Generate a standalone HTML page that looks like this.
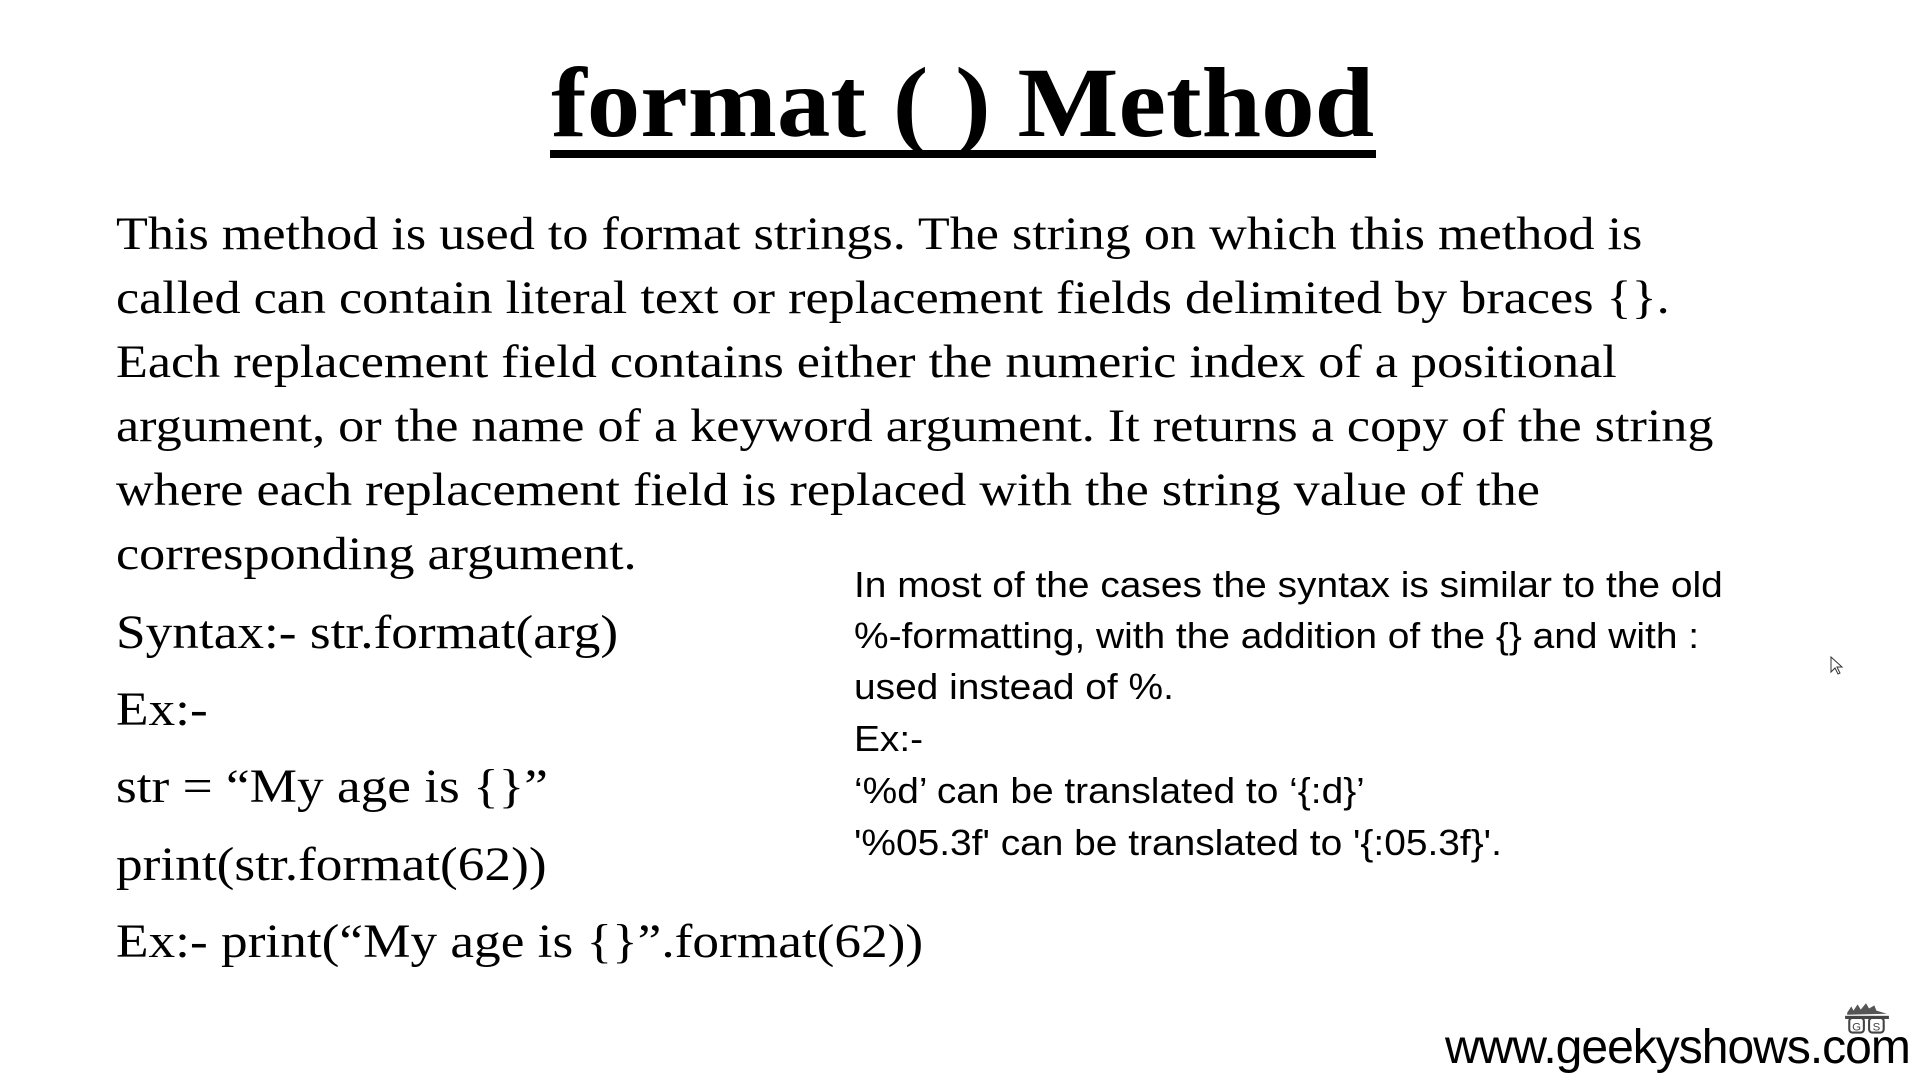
<!DOCTYPE html>
<html><head><meta charset="utf-8"><style>
html,body{margin:0;padding:0;background:#fff;width:1920px;height:1080px;overflow:hidden;position:relative}
.t{position:absolute;white-space:nowrap;line-height:1;color:#000;transform-origin:0 0}
.s{font-family:"Liberation Serif",serif;font-size:47px;transform:scaleX(1.11)}
.x{font-family:"Liberation Sans",sans-serif;font-size:36px;transform:scaleX(1.08)}
</style></head><body>
<div class="t" style="left:550px;width:826px;text-align:center;top:53px;font-family:'Liberation Serif',serif;font-weight:bold;font-size:100px"><span style="display:inline-block;transform:scaleX(1.07)">format ( ) Method</span></div>
<div style="position:absolute;left:550px;top:150px;width:826px;height:8px;background:#000"></div>

<div class="t s" style="left:116px;top:211px">This method is used to format strings. The string on which this method is</div>
<div class="t s" style="left:116px;top:275px">called can contain literal text or replacement fields delimited by braces {}.</div>
<div class="t s" style="left:116px;top:339px">Each replacement field contains either the numeric index of a positional</div>
<div class="t s" style="left:116px;top:403px">argument, or the name of a keyword argument. It returns a copy of the string</div>
<div class="t s" style="left:116px;top:467px">where each replacement field is replaced with the string value of the</div>
<div class="t s" style="left:116px;top:531px">corresponding argument.</div>

<div class="t s" style="left:116px;top:609px;font-size:48px">Syntax:- str.format(arg)</div>
<div class="t s" style="left:116px;top:686px;font-size:48px">Ex:-</div>
<div class="t s" style="left:116px;top:763px;font-size:48px">str = “My age is {}”</div>
<div class="t s" style="left:116px;top:841px;font-size:48px">print(str.format(62))</div>
<div class="t s" style="left:116px;top:918px;font-size:48px">Ex:- print(“My age is {}”.format(62))</div>

<div class="t x" style="left:854px;top:567px">In most of the cases the syntax is similar to the old</div>
<div class="t x" style="left:854px;top:618px">%-formatting, with the addition of the {} and with :</div>
<div class="t x" style="left:854px;top:669px">used instead of %.</div>
<div class="t x" style="left:854px;top:721px">Ex:-</div>
<div class="t x" style="left:854px;top:773px">‘%d’ can be translated to ‘{:d}’</div>
<div class="t x" style="left:854px;top:825px">'%05.3f' can be translated to '{:05.3f}'.</div>

<div class="t" style="left:1445px;top:1024px;font-family:'Liberation Sans',sans-serif;font-size:48px;letter-spacing:-1px">www.geekyshows.com</div>

<svg style="position:absolute;left:1843px;top:1002px" width="48" height="36" viewBox="0 0 46 34">
<path d="M4 10 L8 4 L10 8 L14 2 L17 7 L22 1 L25 6 L30 3 L32 8 L42 11 L4 12 Z" fill="#555"/>
<rect x="2" y="13" width="42" height="3" fill="#444"/>
<rect x="6" y="15" width="14" height="14" rx="3" fill="none" stroke="#444" stroke-width="2"/>
<rect x="25" y="15" width="14" height="14" rx="3" fill="none" stroke="#444" stroke-width="2"/>
<text x="13" y="27" font-family="Liberation Sans" font-size="11" text-anchor="middle" fill="#444">G</text>
<text x="32" y="27" font-family="Liberation Sans" font-size="11" text-anchor="middle" fill="#444">S</text>
</svg>
<svg style="position:absolute;left:1830px;top:656px" width="14" height="20" viewBox="0 0 14 20">
<path d="M1 1 L1 16 L5 12 L8 18 L10 17 L7 11 L12 11 Z" fill="#fff" stroke="#333" stroke-width="1"/>
</svg>
</body></html>
